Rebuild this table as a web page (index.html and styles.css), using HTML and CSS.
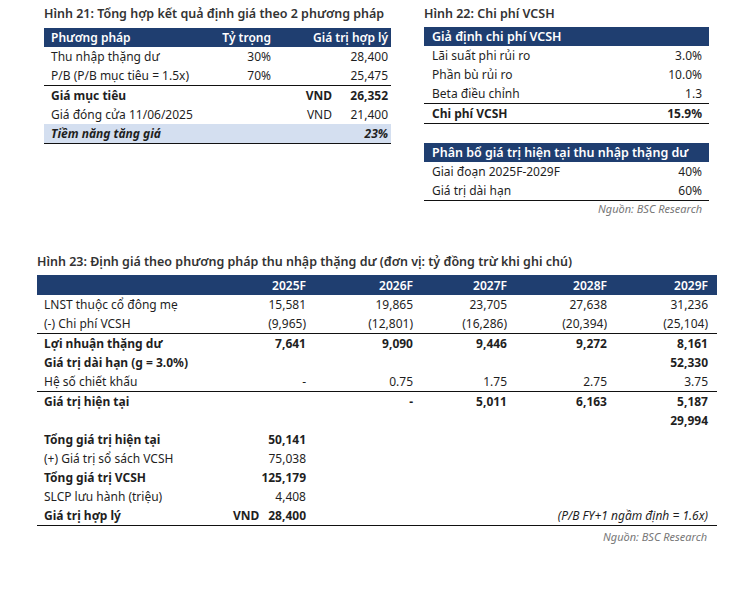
FILE: index.html
```html
<!DOCTYPE html>
<html lang="vi">
<head>
    <meta charset="UTF-8">
    <title>Định giá</title>
    <link rel="stylesheet" href="styles.css">
</head>
<body>
    <div class="top">
        <section class="fig fig21">
            <h2 class="fig_title">Hình 21: Tổng hợp kết quả định giá theo 2 phương pháp</h2>
            <table class="tbl">
                <colgroup>
                    <col style="width:170px"><col style="width:60px"><col style="width:61px"><col style="width:56px">
                </colgroup>
                <tr class="head">
                    <td>Phương pháp</td><td class="num">Tỷ trọng</td><td class="num" colspan="2">Giá trị hợp lý</td>
                </tr>
                <tr><td>Thu nhập thặng dư</td><td class="num">30%</td><td></td><td class="num">28,400</td></tr>
                <tr><td>P/B (P/B mục tiêu = 1.5x)</td><td class="num">70%</td><td></td><td class="num">25,475</td></tr>
                <tr class="bold line_top"><td>Giá mục tiêu</td><td></td><td class="num">VND</td><td class="num">26,352</td></tr>
                <tr><td>Giá đóng cửa 11/06/2025</td><td></td><td class="num">VND</td><td class="num">21,400</td></tr>
                <tr class="bold italic hl line_bottom"><td>Tiềm năng tăng giá</td><td></td><td></td><td class="num">23%</td></tr>
            </table>
        </section>

        <section class="fig fig22">
            <h2 class="fig_title">Hình 22: Chi phí VCSH</h2>
            <table class="tbl side">
                <tr class="head"><td colspan="2">Giả định chi phí VCSH</td></tr>
                <tr><td>Lãi suất phi rủi ro</td><td class="num">3.0%</td></tr>
                <tr><td>Phần bù rủi ro</td><td class="num">10.0%</td></tr>
                <tr><td>Beta điều chỉnh</td><td class="num">1.3</td></tr>
                <tr class="bold line_top line_bottom"><td>Chi phí VCSH</td><td class="num">15.9%</td></tr>
            </table>
            <table class="tbl side second">
                <tr class="head"><td colspan="2">Phân bổ giá trị hiện tại thu nhập thặng dư</td></tr>
                <tr><td>Giai đoạn 2025F-2029F</td><td class="num">40%</td></tr>
                <tr class="line_bottom"><td>Giá trị dài hạn</td><td class="num">60%</td></tr>
            </table>
            <p class="source">Nguồn: BSC Research</p>
        </section>
    </div>

    <section class="fig fig23">
        <h2 class="fig_title">Hình 23: Định giá theo phương pháp thu nhập thặng dư (đơn vị: tỷ đồng trừ khi ghi chú)</h2>
        <table class="tbl big">
            <colgroup>
                <col style="width:173px"><col style="width:100px"><col style="width:107px"><col style="width:94px"><col style="width:100px"><col style="width:106px">
            </colgroup>
            <tr class="head">
                <td></td><td class="num">2025F</td><td class="num">2026F</td><td class="num">2027F</td><td class="num">2028F</td><td class="num last">2029F</td>
            </tr>
            <tr><td>LNST thuộc cổ đông mẹ</td><td class="num">15,581</td><td class="num">19,865</td><td class="num">23,705</td><td class="num">27,638</td><td class="num last">31,236</td></tr>
            <tr><td>(-) Chi phí VCSH</td><td class="num">(9,965)</td><td class="num">(12,801)</td><td class="num">(16,286)</td><td class="num">(20,394)</td><td class="num last">(25,104)</td></tr>
            <tr class="bold line_top"><td>Lợi nhuận thặng dư</td><td class="num">7,641</td><td class="num">9,090</td><td class="num">9,446</td><td class="num">9,272</td><td class="num last">8,161</td></tr>
            <tr class="bold"><td>Giá trị dài hạn (g = 3.0%)</td><td></td><td></td><td></td><td></td><td class="num last">52,330</td></tr>
            <tr><td>Hệ số chiết khấu</td><td class="num">-</td><td class="num">0.75</td><td class="num">1.75</td><td class="num">2.75</td><td class="num last">3.75</td></tr>
            <tr class="bold line_top"><td>Giá trị hiện tại</td><td></td><td class="num">-</td><td class="num">5,011</td><td class="num">6,163</td><td class="num last">5,187</td></tr>
            <tr class="bold"><td></td><td></td><td></td><td></td><td></td><td class="num last">29,994</td></tr>
            <tr class="bold"><td>Tổng giá trị hiện tại</td><td class="num">50,141</td><td colspan="4"></td></tr>
            <tr><td>(+) Giá trị sổ sách VCSH</td><td class="num">75,038</td><td colspan="4"></td></tr>
            <tr class="bold"><td>Tổng giá trị VCSH</td><td class="num">125,179</td><td colspan="4"></td></tr>
            <tr><td>SLCP lưu hành (triệu)</td><td class="num">4,408</td><td colspan="4"></td></tr>
            <tr class="line_bottom">
                <td class="bold">Giá trị hợp lý</td>
                <td class="num bold"><span class="unit">VND</span>28,400</td>
                <td></td>
                <td class="num note last" colspan="3">(P/B FY+1 ngầm định = 1.6x)</td>
            </tr>
        </table>
        <p class="source">Nguồn: BSC Research</p>
    </section>
</body>
</html>
```

FILE: styles.css
```css
body {
    margin: 0;
    background: #ffffff;
    color: #1f1f1f;
    font-family: "Noto Sans", "Open Sans", sans-serif;
    font-size: 12px;
}

.top {
    display: flex;
    gap: 33px;
    padding: 6px 0 0 44px;
}

.fig21 {
    width: 347px;
}

.fig22 {
    width: 285px;
}

.fig_title {
    margin: 0 0 6px;
    font-size: 12.5px;
    font-weight: 600;
    line-height: 16px;
    color: #333333;
    white-space: nowrap;
}

.fig22 .fig_title {
    margin-bottom: 5px;
}

.tbl {
    width: 100%;
    border-collapse: collapse;
    table-layout: fixed;
}

.tbl td {
    height: 19px;
    padding: 0 3px 0 7px;
    line-height: 19px;
    white-space: nowrap;
}

.tbl .head td {
    background: #1f3e70;
    color: #ffffff;
    font-weight: 600;
}

.num {
    text-align: right;
}

.bold td,
td.bold {
    font-weight: 700;
}

.italic td {
    font-style: italic;
}

.hl td {
    background: #d4dff0;
}

.line_top td {
    border-top: 1.5px solid #111111;
}

.line_bottom td {
    border-bottom: 1.5px solid #111111;
}

.side td {
    padding: 0 7px 0 8px;
}

.side .head td {
    height: 19px;
    font-size: 12.5px;
}

.second {
    margin-top: 19px;
}

.source {
    margin: 0;
    padding-right: 7px;
    text-align: right;
    font-style: italic;
    color: #777777;
    font-size: 11px;
    line-height: 16px;
}

.fig23 {
    width: 680px;
    margin: 37px 0 0 37px;
}

.fig23 .fig_title {
    margin-bottom: 5px;
}

.big td {
    height: 19px;
    line-height: 19px;
    padding: 0 4px 0 7px;
}

.big .head td {
    height: 20px;
}

.big td.last {
    padding-right: 9px;
}

.unit {
    margin-right: 9px;
}

.note {
    font-style: italic;
}

.fig23 .source {
    padding-right: 10px;
    margin-top: 3px;
}
```
